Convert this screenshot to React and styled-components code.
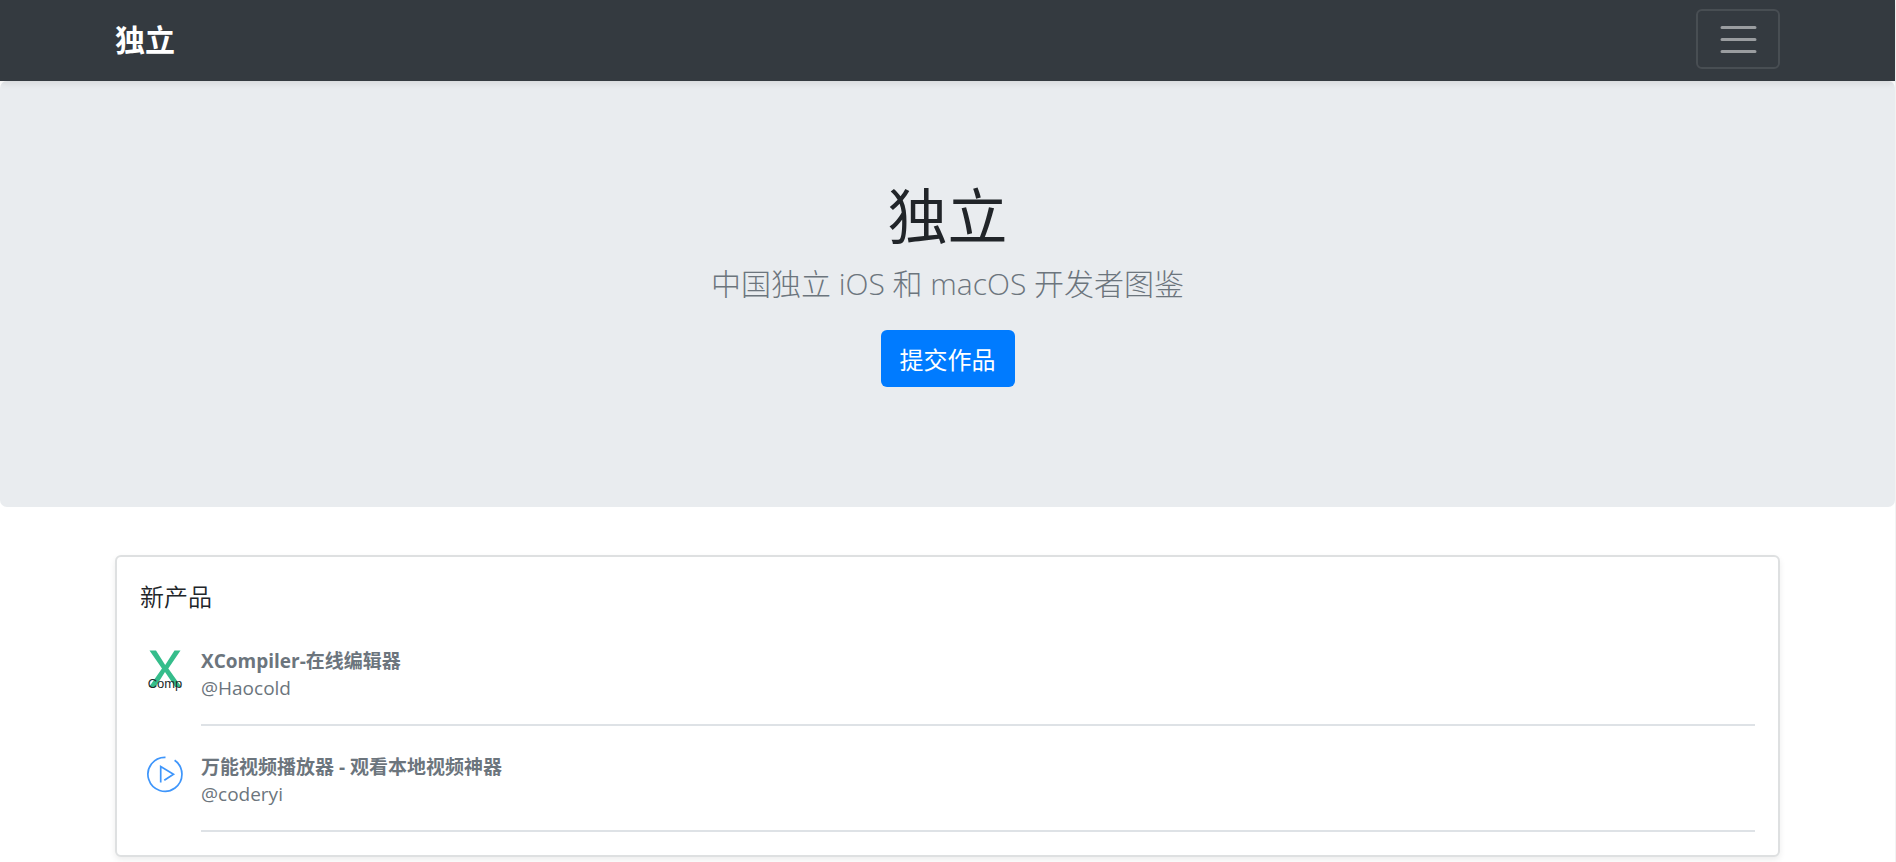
import React from "react";
import styled, { createGlobalStyle } from "styled-components";

const GlobalStyle = createGlobalStyle`
  *, *::before, *::after { box-sizing: border-box; }
  body {
    margin: 0;
    background: #fff;
    color: #212529;
    font-family: "Open Sans", "Noto Sans CJK SC", sans-serif;
    font-size: 19px;
    line-height: 27px;
  }
  h1, h2, p, ul { margin: 0; padding: 0; }
`;

const Page = styled.div`
  min-height: 100vh;
  border-right: 1px solid #f1f3f3;
`;

const Container = styled.div`
  width: 100%;
  max-width: 1711px;
  margin: 0 auto;
  padding: 0 23px;
`;

const NavBar = styled.header`
  position: relative;
  background: #343a40;
  box-shadow: 0 3px 6px rgba(0, 0, 0, 0.075);
`;

const NavRow = styled(Container)`
  display: flex;
  align-items: center;
  justify-content: space-between;
  padding-top: 9px;
  padding-bottom: 12px;
`;

const Brand = styled.a`
  padding-top: 2px;
  color: #fff;
  font-size: 30px;
  font-weight: 700;
  line-height: 44px;
  text-decoration: none;
`;

const Toggler = styled.button`
  display: flex;
  align-items: center;
  justify-content: center;
  width: 84px;
  height: 60px;
  padding: 0;
  background: transparent;
  border: 2px solid rgba(255, 255, 255, 0.1);
  border-radius: 6px;
  cursor: pointer;
`;

const Hero = styled.section`
  display: flex;
  flex-direction: column;
  align-items: center;
  padding: 99px 24px 120px;
  background: #e9ecef;
  border-radius: 7px;
  text-align: center;
`;

const HeroTitle = styled.h1`
  margin-bottom: 9px;
  font-size: 60px;
  font-weight: 400;
  line-height: 72px;
`;

const Lead = styled.p`
  margin-bottom: 24px;
  color: #6c757d;
  font-size: 30px;
  font-weight: 300;
  line-height: 45px;
`;

const SubmitButton = styled.button`
  padding: 12px 19px 9px;
  background: #007bff;
  border: 0;
  border-radius: 6px;
  color: #fff;
  font: inherit;
  font-size: 24px;
  line-height: 36px;
  cursor: pointer;
`;

const Main = styled.main`
  padding: 48px 0 5px;
`;

const Card = styled.section`
  padding: 22px 23px 23px;
  background: #fff;
  border: 2px solid #dee0e1;
  border-radius: 6px;
  box-shadow: 0 3px 6px rgba(0, 0, 0, 0.075);
`;

const CardTitle = styled.h2`
  margin-bottom: 33px;
  font-size: 24px;
  font-weight: 350;
  line-height: 36px;
`;

const ProductList = styled.ul`
  list-style: none;
`;

const Product = styled.li`
  display: flex;
  gap: 13px;
  & + & { margin-top: 28px; }
`;

const ProductIcon = styled.svg`
  flex: none;
  display: block;
  width: 48px;
  height: 48px;
`;

const ProductText = styled.div`
  flex: 1;
  color: #6c757d;
  padding-bottom: 22px;
  border-bottom: 2px solid #dee2e6;
`;

const ProductName = styled.a`
  display: block;
  color: inherit;
  font-weight: 700;
  text-decoration: none;
`;

const Author = styled.p`
  font-weight: 400;
`;

const MenuIcon = () => (
  <svg width="45" height="45" viewBox="0 0 45 45" fill="none" stroke="rgba(255,255,255,0.5)" strokeWidth="3" strokeLinecap="round" aria-hidden="true">
    <path d="M6 10.500h33M6 22.500h33M6 34.500h33" />
  </svg>
);

const CompilerIcon = () => (
  <ProductIcon viewBox="0 0 48 48" aria-hidden="true">
    <path d="M9.500 2.500h6.500l9.200 14.500L34.500 2.500h6L28.300 20.500 41.500 39h-6.300L25 24 15.500 39H9l13-18.500z" fill="#35bd8b" />
    <text x="25" y="40" textAnchor="middle" fontFamily="Liberation Sans, sans-serif" fontSize="13" fill="#222b2b">Comp</text>
  </ProductIcon>
);

const PlayerIcon = () => (
  <ProductIcon viewBox="0 0 48 48" fill="none" stroke="#3f96fb" strokeWidth="1.700" aria-hidden="true">
    <path d="M25.500 3.300A17 17 0 1 0 34.600 6.300" />
    <path d="M20.700 28.500V12.500L33.500 20.300 24.300 26.200" />
  </ProductIcon>
);

const products = [
  { name: "XCompiler-在线编辑器", author: "@Haocold", Icon: CompilerIcon },
  { name: "万能视频播放器 - 观看本地视频神器", author: "@coderyi", Icon: PlayerIcon },
];

export default function App() {
  return (
    <Page lang="zh-CN">
      <GlobalStyle />
      <NavBar>
        <NavRow>
          <Brand href="#">独立</Brand>
          <Toggler type="button" aria-label="菜单">
            <MenuIcon />
          </Toggler>
        </NavRow>
      </NavBar>
      <Hero>
        <HeroTitle>独立</HeroTitle>
        <Lead>中国独立 iOS 和 macOS 开发者图鉴</Lead>
        <SubmitButton type="button">提交作品</SubmitButton>
      </Hero>
      <Main>
        <Container>
          <Card>
            <CardTitle>新产品</CardTitle>
            <ProductList>
              {products.map(({ name, author, Icon }) => (
                <Product key={name}>
                  <Icon />
                  <ProductText>
                    <ProductName href="#">{name}</ProductName>
                    <Author>{author}</Author>
                  </ProductText>
                </Product>
              ))}
            </ProductList>
          </Card>
        </Container>
      </Main>
    </Page>
  );
}
